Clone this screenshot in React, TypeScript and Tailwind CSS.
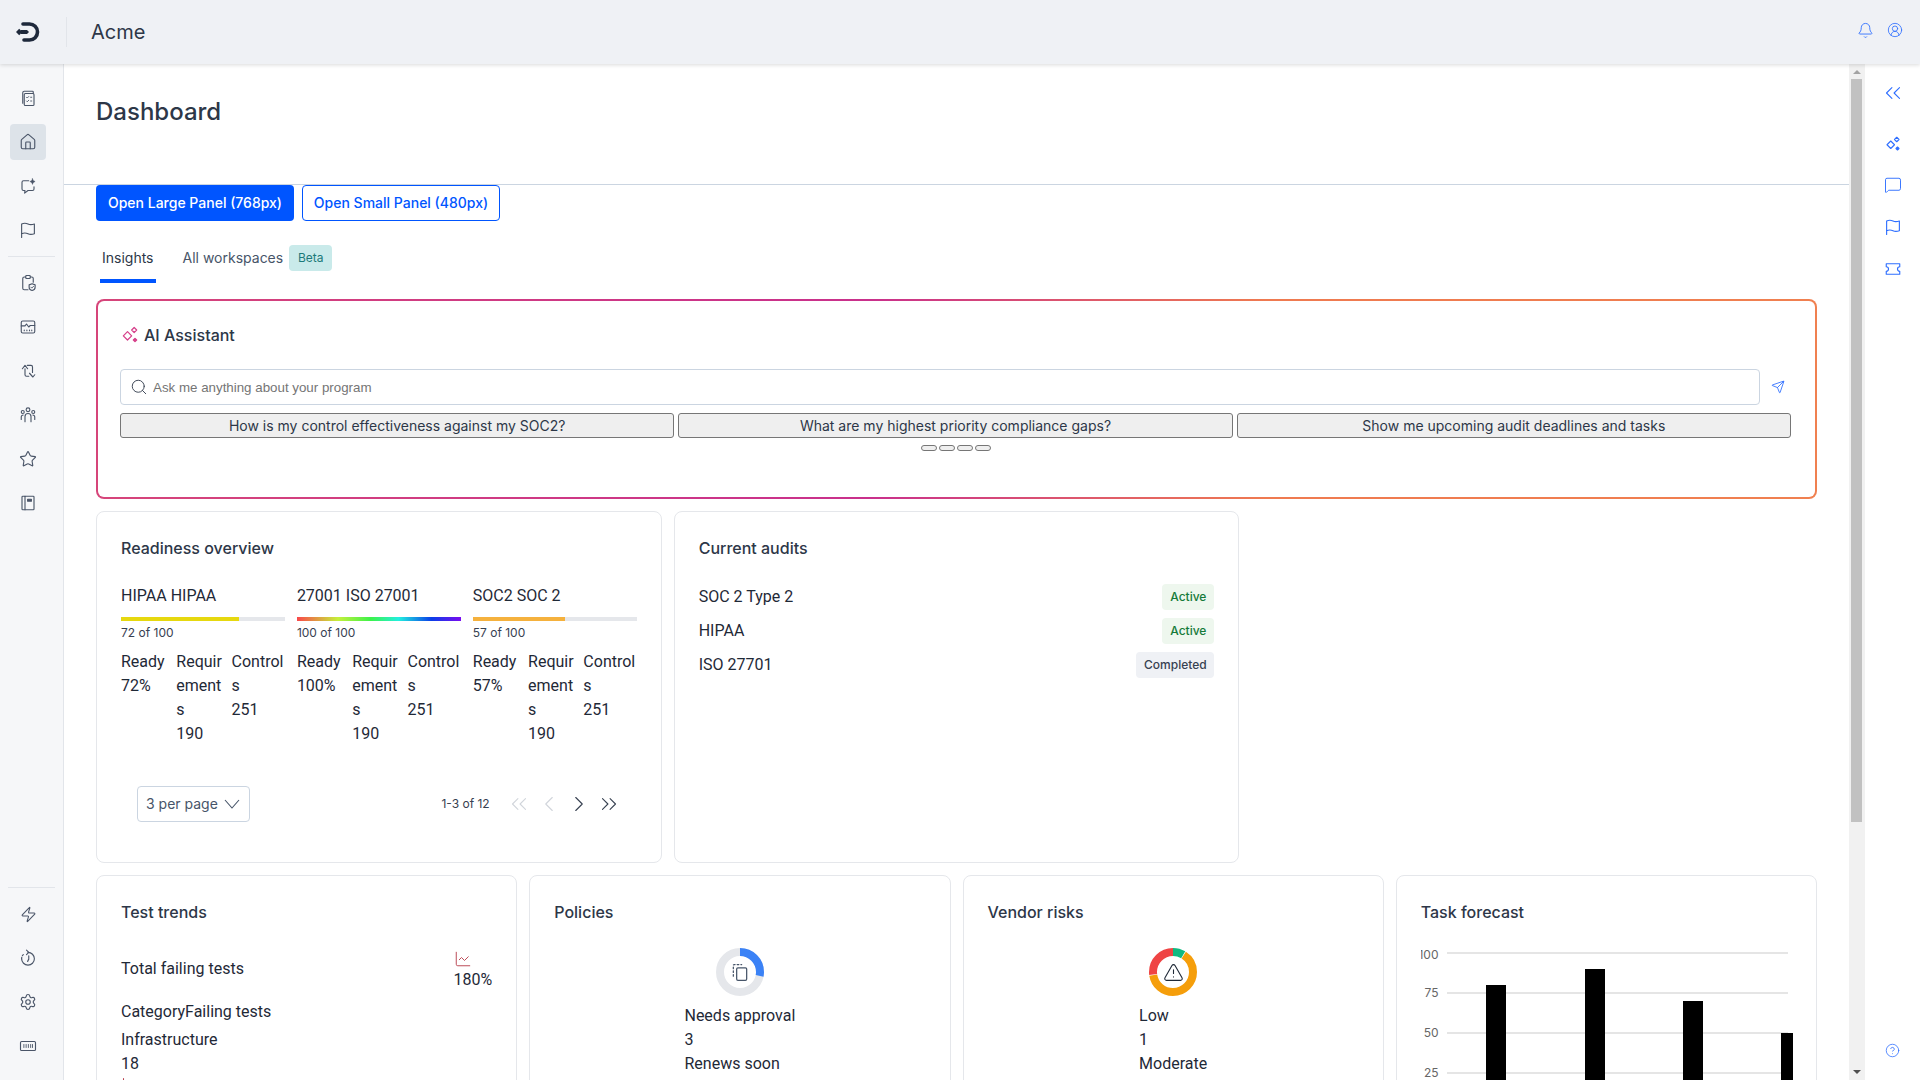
import {
  Bell,
  ChartLine,
  ChevronLeft,
  ChevronRight,
  ChevronsLeft,
  ChevronsRight,
  CircleHelp,
  CircleUserRound,
  House,
  MessageSquare,
  Search,
  Send,
  Settings,
  Star,
  TriangleAlert,
  Zap,
} from 'lucide-react'
import type { ReactNode } from 'react'

function Ico({ children, size = 18 }: { children: ReactNode; size?: number }) {
  return (
    <svg width={size} height={size} viewBox="0 0 24 24" fill="none" stroke="currentColor" strokeWidth={1.5} strokeLinecap="round" strokeLinejoin="round">
      {children}
    </svg>
  )
}

const Logo = () => (
  <svg width="24" height="20" viewBox="0 0 24 20" fill="none">
    <path d="M7 2h6.500a8 8 0 0 1 0 16H8" stroke="#1e293b" strokeWidth="3.600" strokeLinecap="round" />
    <path d="M0 10l3.200-3.200L6.400 10l-3.200 3.200z" fill="#1e293b" />
    <path d="M5 8h6l2 2-2 2H5z" fill="#1e293b" />
  </svg>
)

const FlagIco = ({ size = 18 }: { size?: number }) => (
  <Ico size={size}>
    <path d="M3.500 22V4c3-1.500 5.500-1.500 8.500 0s5.500 1 8.500 0v13c-3 1-5.500 1.500-8.500 0s-5.500-1.500-8.500 0" />
  </Ico>
)

const SparkIco = ({ size = 20 }: { size?: number }) => (
  <Ico size={size}>
    <path d="M9 8l5 5-5 5-5-5z" />
    <path d="M17 3l3 3-3 3-3-3z" />
    <path d="M18 16l2 2-2 2-2-2z" fill="currentColor" />
  </Ico>
)

const navTop = [
  <Ico key="a">
    <path d="M5 19V5a2 2 0 0 1 2-2h11a1 1 0 0 1 1 1v2" />
    <rect x="7" y="6" width="13" height="16" rx="1.500" />
    <path d="M10 11l1 1 2-2M10 16l1 1 2-2M15.500 11h1.500M15.500 16h1.500" strokeWidth="1.200" />
  </Ico>,
  <House key="b" size={18} strokeWidth={1.5} />,
  <Ico key="c">
    <path d="M13 5H6a2 2 0 0 0-2 2v9a2 2 0 0 0 2 2h2l-.5 3.500L12 18h6a2 2 0 0 0 2-2v-3" />
    <path d="M18 2l1 2.500L21.500 6 19 7.500 18 10l-1-2.500L14.500 6 17 4.500z" fill="currentColor" strokeWidth="0.500" />
  </Ico>,
  <FlagIco key="d" />,
]

const navMiddle = [
  <Ico key="a">
    <path d="M9 4H7a2 2 0 0 0-2 2v13a2 2 0 0 0 2 2h5" />
    <path d="M15 4h2a2 2 0 0 1 2 2v5" />
    <rect x="9" y="2" width="6" height="4" rx="1" />
    <path d="M17.500 13l4 1.500v3c0 2.500-2 4-4 4.500-2-.5-4-2-4-4.500v-3z" />
    <path d="M15.800 17.500l1.300 1.300 2.300-2.400" strokeWidth="1.200" />
  </Ico>,
  <Ico key="b">
    <rect x="3" y="4" width="18" height="16" rx="2" />
    <path d="M3 10.500h5l2-2.500 3 4 2-2h6" />
    <path d="M7 16v1M10.500 16v1M14 16v1M17 16v1" />
  </Ico>,
  <Ico key="c">
    <path d="M11 4.500h5a2 2 0 0 1 2 2V14" />
    <path d="M8 9v8a2 2 0 0 0 2 2h3" />
    <path d="M4.500 9L8 4.500 11.500 9" />
    <path d="M14 15l4.500 5 2.500-3" />
  </Ico>,
  <Ico key="d">
    <circle cx="12" cy="5" r="2.500" />
    <circle cx="5" cy="8" r="2" />
    <circle cx="19" cy="8" r="2" />
    <path d="M8 21v-7a4 4 0 0 1 8 0v7" />
    <path d="M3 18v-3.500a2.500 2.500 0 0 1 2.500-2.500M21 18v-3.500a2.500 2.500 0 0 0-2.500-2.500" />
  </Ico>,
  <Star key="e" size={18} strokeWidth={1.5} />,
  <Ico key="f">
    <rect x="4" y="3" width="16" height="18" rx="1" />
    <path d="M8 3v18" />
    <path d="M11.500 7h5v2.500h-5z" fill="currentColor" />
  </Ico>,
]

const navBottom = [
  <Zap key="a" size={17} strokeWidth={1.5} />,
  <Ico key="b">
    <path d="M12 4.500a8.500 8.500 0 1 1-8.500 8.500" />
    <path d="M3.500 13a8.500 8.500 0 0 1 2.500-6" strokeDasharray="2 2" />
    <path d="M10 1.500l3 3-3 3" />
    <path d="M13 9v4.500l-1.500 3" />
  </Ico>,
  <Settings key="c" size={18} strokeWidth={1.5} />,
  <Ico key="d">
    <rect x="2" y="6" width="20" height="12" rx="1.500" />
    <path d="M6.500 10v4M9.500 10v4M12.500 10v4M15.500 10v4M18 10v4" strokeWidth="1.200" />
  </Ico>,
]

function NavItem({ children, active }: { children: ReactNode; active?: boolean }) {
  return (
    <div className={active ? 'ml-[10px] flex h-9 w-9 items-center justify-center rounded bg-[#dde3e9] text-[#4a5568]' : 'ml-[10px] flex h-9 w-9 items-center justify-center rounded text-[#4a5568]'}>
      {children}
    </div>
  )
}

function Card({ title, className, children }: { title: string; className?: string; children: ReactNode }) {
  return (
    <div className={`rounded-lg border border-[#e5e7eb] bg-white p-6 ${className ?? ''}`}>
      <h3 className="text-base leading-6 font-medium text-[#2d3748]">{title}</h3>
      {children}
    </div>
  )
}

const frameworks = [
  { name: 'HIPAA HIPAA', score: '72 of 100', ready: '72%', bar: <div className="h-full w-[72%] bg-[#e6d80f]" /> },
  {
    name: '27001 ISO 27001',
    score: '100 of 100',
    ready: '100%',
    bar: <div className="h-full w-full bg-[linear-gradient(90deg,#f9484a,#c5f03a_25%,#3cf24a_45%,#22efe0_62%,#0a3ee8_82%,#7a0cf0)]" />,
  },
  { name: 'SOC2 SOC 2', score: '57 of 100', ready: '57%', bar: <div className="h-full w-[56%] bg-[#f5b13d]" /> },
]

function Framework({ f }: { f: (typeof frameworks)[number] }) {
  return (
    <div>
      <div className="font-['Roboto',sans-serif] text-base leading-6 text-[#1f2937]">{f.name}</div>
      <div className="mt-[9px] h-1 bg-[#e5e7eb]">{f.bar}</div>
      <div className="mt-1 text-xs leading-4 text-[#374151]">{f.score}</div>
      <div className="mt-[9px] grid grid-cols-3 gap-x-[2px] font-['Roboto',sans-serif] text-base leading-6 break-all text-[#1f2937]">
        <div>
          <div>Ready</div>
          <div>{f.ready}</div>
        </div>
        <div>
          <div>Requirements</div>
          <div>190</div>
        </div>
        <div>
          <div>Controls</div>
          <div>251</div>
        </div>
      </div>
    </div>
  )
}

function Donut({ segments, track, children }: { segments: { color: string; from: number; to: number }[]; track?: string; children: ReactNode }) {
  const r = 20
  const c = 2 * Math.PI * r
  return (
    <div className="relative mx-auto mt-6 h-12 w-12">
      <svg width="48" height="48" viewBox="0 0 48 48" className="-rotate-90">
        {track && <circle cx="24" cy="24" r={r} fill="none" stroke={track} strokeWidth="8" />}
        {segments.map((s) => (
          <circle
            key={s.color}
            cx="24"
            cy="24"
            r={r}
            fill="none"
            stroke={s.color}
            strokeWidth="8"
            strokeDasharray={`${(s.to - s.from) * c} ${c}`}
            strokeDashoffset={-s.from * c}
          />
        ))}
      </svg>
      <div className="absolute inset-0 flex items-center justify-center">{children}</div>
    </div>
  )
}

function TaskChart() {
  const ticks = [100, 75, 50, 25, 0]
  const bars = [
    { x: 65, v: 80 },
    { x: 164, v: 90 },
    { x: 262, v: 70 },
    { x: 360, v: 50 },
  ]
  const y = (v: number) => 8 + (100 - v) * 1.6
  return (
    <svg width="372" height="260" className="mt-[21px] block">
      {ticks.map((t) => (
        <g key={t}>
          <line x1="26" x2="367" y1={y(t)} y2={y(t)} stroke="#e5e5e5" strokeWidth="2" />
          <text x="17.500" y={y(t) + (t === 100 ? 6 : 4)} textAnchor="end" fontSize="12" fill="#666666">
            {t}
          </text>
        </g>
      ))}
      {bars.map((b) => (
        <rect key={b.x} x={b.x} y={y(b.v)} width="20" height={b.v * 1.6} fill="#000000" />
      ))}
    </svg>
  )
}

function ScrollStrip() {
  return (
    <div className="flex w-4 shrink-0 flex-col bg-[#f1f1f1]">
      <div className="flex h-[15px] items-center justify-center">
        <svg width="8" height="4" viewBox="0 0 8 4">
          <path d="M0 4l4-4 4 4z" fill="#a3a3a3" />
        </svg>
      </div>
      <div className="ml-[2px] h-[743px] w-[11px] bg-[#c1c1c1]" />
      <div className="mt-auto flex h-[17px] items-center justify-center">
        <svg width="8" height="4" viewBox="0 0 8 4">
          <path d="M0 0l4 4 4-4z" fill="#505050" />
        </svg>
      </div>
    </div>
  )
}

export default function App() {
  return (
    <div className="flex h-screen flex-col overflow-hidden bg-white font-['Inter',sans-serif] text-[#1f2937]">
      <header className="z-10 flex h-16 shrink-0 items-center bg-[#eff1f5] pr-[17px] pl-4 shadow-[0_1px_4px_rgba(0,0,0,0.15)]">
        <Logo />
        <div className="mr-6 ml-[26px] h-[30px] w-px bg-[#e2e5ea]" />
        <span className="text-xl text-[#2d3748]">Acme</span>
        <div className="-mt-1 ml-auto flex items-center gap-[13px] text-[#2f6fff]">
          <Bell size={17} strokeWidth={1.25} />
          <CircleUserRound size={16} strokeWidth={1.25} />
        </div>
      </header>

      <div className="flex min-h-0 flex-1">
        <nav className="flex w-16 shrink-0 flex-col justify-between border-r border-[#e2e5ea] bg-[#f6f7f9] pt-4 pb-4">
          <div className="flex flex-col gap-2">
            {navTop.map((icon, i) => (
              <NavItem key={i} active={i === 1}>
                {icon}
              </NavItem>
            ))}
            <div className="mx-2 h-px bg-[#e2e5ea]" />
            {navMiddle.map((icon, i) => (
              <NavItem key={i}>{icon}</NavItem>
            ))}
          </div>
          <div className="flex flex-col gap-2">
            <div className="mx-2 h-px bg-[#e2e5ea]" />
            {navBottom.map((icon, i) => (
              <NavItem key={i}>{icon}</NavItem>
            ))}
          </div>
        </nav>

        <main className="min-w-0 flex-1 overflow-hidden">
          <div className="h-[121px] border-b border-[#cbd5e1] px-8 pt-8">
            <h1 className="text-2xl leading-8 font-medium text-[#2d3748]">Dashboard</h1>
          </div>

          <div className="pr-8 pb-6 pl-8">
            <div className="flex gap-2">
              <button className="h-9 w-[198px] rounded bg-[#0055ff] text-sm font-medium text-white">Open Large Panel (768px)</button>
              <button className="h-9 w-[198px] rounded border border-[#0055ff] bg-white text-sm font-medium text-[#0055ff]">Open Small Panel (480px)</button>
            </div>

            <div className="mt-6 ml-1 flex h-[38px] gap-[27px] text-sm">
              <div className="border-b-4 border-[#0055ff] px-[2px] pt-[3px] text-[#2d3748]">Insights</div>
              <div className="flex items-start gap-[6px] pt-[3px] text-[#475569]">
                All workspaces
                <span className="-mt-[3px] flex h-[26px] w-[43px] items-center justify-center rounded bg-[#c9eaea] text-xs text-[#1d7a7a]">Beta</span>
              </div>
            </div>

            <div className="mt-4 h-[200px] rounded-lg bg-[linear-gradient(90deg,#d6457a_0%,#c9308c_45%,#ef7a50_68%,#f08050_100%)] p-[2px]">
              <div className="h-full rounded-md bg-white pt-[22px] pr-6 pl-[22px]">
                <div className="flex items-center gap-1 text-base leading-6 font-medium text-[#2d3748]">
                  <span className="text-[#d6408a]">
                    <SparkIco />
                  </span>
                  AI Assistant
                </div>
                <div className="mt-[22px] flex items-center">
                  <div className="flex h-9 w-[1640px] items-center gap-[5px] rounded border border-[#cbd5e1] pl-[9px]">
                    <Search size={18} strokeWidth={1.25} className="text-[#374151]" />
                    <input
                      className="flex-1 bg-transparent pt-px font-['Liberation_Sans',Arial,sans-serif] text-[13.33px] outline-none placeholder:text-[#757575]"
                      placeholder="Ask me anything about your program"
                    />
                  </div>
                  <Send size={14} strokeWidth={1.5} className="ml-[11px] text-[#2f6fff]" />
                </div>
                <div className="mt-2 grid grid-cols-3 gap-1">
                  {['How is my control effectiveness against my SOC2?', 'What are my highest priority compliance gaps?', 'Show me upcoming audit deadlines and tasks'].map((q) => (
                    <button key={q} className="h-[25px] rounded-[3px] border border-[#767676] bg-[#efefef] text-sm text-[#2d3748]">
                      {q}
                    </button>
                  ))}
                </div>
                <div className="mt-[7px] flex justify-center gap-[2px]">
                  {[0, 1, 2, 3].map((i) => (
                    <button key={i} className="h-[6px] w-4 rounded-[3px] border border-[#767676] bg-[#efefef]" />
                  ))}
                </div>
              </div>
            </div>

            <div className="mt-3 grid grid-cols-3 gap-3">
              <Card title="Readiness overview" className="h-[352px]">
                <div className="mt-6 grid grid-cols-3 gap-3">
                  {frameworks.map((f) => (
                    <Framework key={f.name} f={f} />
                  ))}
                </div>
                <div className="mt-10 flex items-center justify-between pr-[15px] pl-4">
                  <div className="flex h-9 w-[113px] items-center justify-between rounded border border-[#cbd5e1] pr-[9px] pl-2 text-sm text-[#475569]">
                    3 per page
                    <svg width="16" height="10" viewBox="0 0 16 10" fill="none" stroke="currentColor" strokeWidth="1.100">
                      <path d="M1 1l7 8 7-8" />
                    </svg>
                  </div>
                  <div className="flex items-center">
                    <span className="mr-[16px] text-xs text-[#374151]">1-3 of 12</span>
                    <div className="flex items-center gap-1">
                      <ChevronsLeft size={26} strokeWidth={1} className="text-[#d1d5db]" />
                      <ChevronLeft size={26} strokeWidth={1} className="text-[#d1d5db]" />
                      <ChevronRight size={26} strokeWidth={1} className="text-[#374151]" />
                      <ChevronsRight size={26} strokeWidth={1} className="text-[#374151]" />
                    </div>
                  </div>
                </div>
              </Card>

              <Card title="Current audits" className="h-[352px]">
                <div className="mt-6 flex flex-col gap-2 font-['Roboto',sans-serif]">
                  <div className="flex h-[26px] items-center justify-between text-base">
                    SOC 2 Type 2
                    <span className="flex h-[26px] w-[52px] items-center justify-center rounded bg-[#eef7ee] font-['Inter',sans-serif] text-xs font-medium text-[#157a3a]">Active</span>
                  </div>
                  <div className="flex h-[26px] items-center justify-between text-base">
                    HIPAA
                    <span className="flex h-[26px] w-[52px] items-center justify-center rounded bg-[#eef7ee] font-['Inter',sans-serif] text-xs font-medium text-[#157a3a]">Active</span>
                  </div>
                  <div className="flex h-[26px] items-center justify-between text-base">
                    ISO 27701
                    <span className="flex h-[26px] w-[78px] items-center justify-center rounded bg-[#eff1f5] font-['Inter',sans-serif] text-xs font-medium text-[#374151]">Completed</span>
                  </div>
                </div>
              </Card>
            </div>

            <div className="mt-3 grid grid-cols-4 gap-3">
              <Card title="Test trends" className="h-[420px]">
                <div className="font-['Roboto',sans-serif]">
                  <div className="mt-[26px] flex items-center justify-between">
                    <span className="mb-1">Total failing tests</span>
                    <div className="flex flex-col text-[#1f2937]">
                      <ChartLine size={20} strokeWidth={1.25} className="-ml-px h-[18px] text-[#b7424f]" />
                      <span className="leading-6">180%</span>
                    </div>
                  </div>
                  <div className="mt-2 leading-6">CategoryFailing tests</div>
                  <div className="mt-1 leading-6">Infrastructure</div>
                  <div className="leading-6">18</div>
                  <ChartLine size={20} strokeWidth={1.25} className="text-[#b7424f]" />
                </div>
              </Card>

              <Card title="Policies" className="h-[420px]">
                <Donut track="#e5e7eb" segments={[{ color: '#3b82f6', from: 0, to: 0.28 }]}>
                  <span className="text-[#475569]">
                    <Ico size={20}>
                      <path d="M4 17V4a1 1 0 0 1 1-1h9" strokeDasharray="2 2.500" />
                      <rect x="8" y="7" width="12" height="15" rx="1.500" />
                    </Ico>
                  </span>
                </Donut>
                <div className="mx-auto mt-2 w-fit font-['Roboto',sans-serif] leading-6">
                  <div>Needs approval</div>
                  <div>3</div>
                  <div>Renews soon</div>
                  <div>2</div>
                </div>
              </Card>

              <Card title="Vendor risks" className="h-[420px]">
                <Donut
                  segments={[
                    { color: '#10b981', from: 0, to: 0.085 },
                    { color: '#f59e0b', from: 0.09, to: 0.72 },
                    { color: '#ef4444', from: 0.725, to: 0.995 },
                  ]}
                >
                  <TriangleAlert size={21} strokeWidth={1.25} className="text-[#1f2937]" />
                </Donut>
                <div className="mx-auto mt-2 w-fit font-['Roboto',sans-serif] leading-6">
                  <div>Low</div>
                  <div>1</div>
                  <div>Moderate</div>
                  <div>6</div>
                </div>
              </Card>

              <Card title="Task forecast" className="h-[420px]">
                <TaskChart />
              </Card>
            </div>
          </div>
        </main>

        <ScrollStrip />

        <aside className="flex w-[55px] shrink-0 flex-col items-center justify-between pt-2 pb-[22px] text-[#2f6fff]">
          <div className="flex flex-col items-center">
            <div className="flex h-[42px] items-center">
              <ChevronsLeft size={26} strokeWidth={1} />
            </div>
            <div className="mt-[9px] flex h-[41px] items-center">
              <SparkIco size={18} />
            </div>
            <div className="flex h-[42px] items-center">
              <MessageSquare size={18} strokeWidth={1.25} />
            </div>
            <div className="flex h-[42px] items-center">
              <FlagIco size={18} />
            </div>
            <div className="flex h-[42px] items-center">
              <Ico size={18}>
                <path d="M3 5h18v4a3 3 0 0 0 0 6v4H3v-4a3 3 0 0 0 0-6z" />
              </Ico>
            </div>
          </div>
          <CircleHelp size={15} strokeWidth={1.25} />
        </aside>
      </div>
    </div>
  )
}
